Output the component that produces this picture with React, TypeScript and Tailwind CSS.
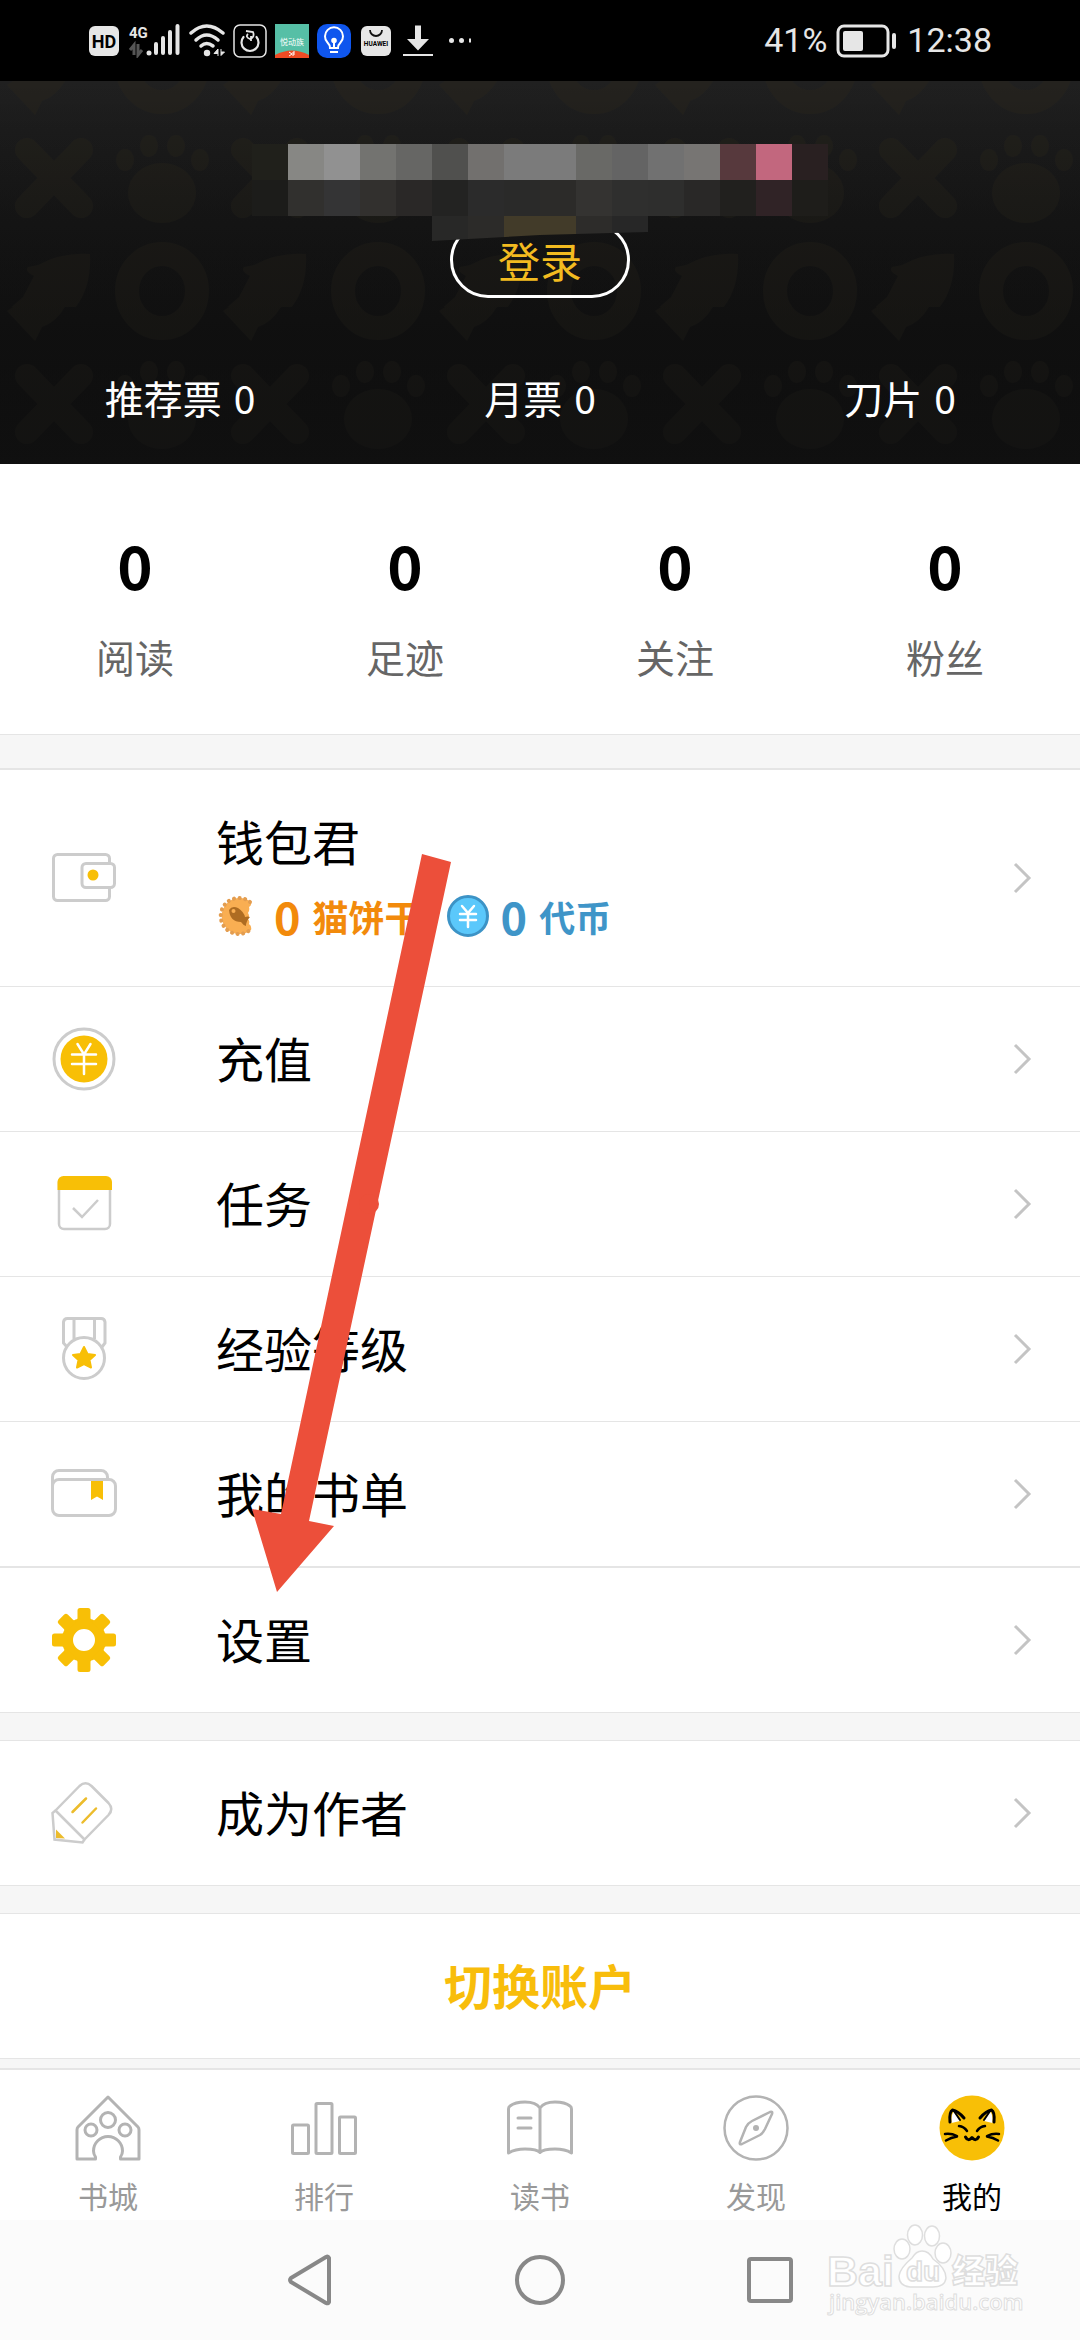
import { ReactNode } from "react"

const GRAY = "#cccccc"
const YELLOW = "#f8bf06"

const PawPattern = () => (
  <svg className="absolute inset-0 h-full w-full" aria-hidden="true">
    <defs>
      <linearGradient id="headerShade" x1="0" y1="0" x2="0" y2="1">
        <stop offset="0" stopColor="#202020" />
        <stop offset="1" stopColor="#101010" />
      </linearGradient>
      <linearGradient id="patternFade" x1="0" y1="0" x2="0" y2="1">
        <stop offset="0" stopColor="#000" stopOpacity="0" />
        <stop offset="1" stopColor="#101010" stopOpacity="0.8" />
      </linearGradient>
      <pattern id="paws" width="216" height="226" patternUnits="userSpaceOnUse">
        <g fill="#25231d">
          <path d="M27 69L81 125M81 69L27 125" stroke="#25231d" strokeWidth="24" strokeLinecap="round" />
          <ellipse cx="162" cy="112" rx="34" ry="30" />
          <ellipse cx="125" cy="79" rx="9" ry="11" />
          <ellipse cx="149" cy="65" rx="9" ry="11" />
          <ellipse cx="176" cy="65" rx="9" ry="11" />
          <ellipse cx="200" cy="79" rx="9" ry="11" />
          <path d="M90 173C92 215 72 240 42 246L35 260L7 230L23 216L34 195Q24 190 28 186L38 184Q62 171 90 173Z" />
          <path d="M7 4L28 -10H70Q60 14 42 20L35 34Z" />
          <ellipse cx="162" cy="210" rx="35" ry="37" fill="none" stroke="#25231d" strokeWidth="24" />
          <ellipse cx="162" cy="-16" rx="35" ry="37" fill="none" stroke="#25231d" strokeWidth="24" />
        </g>
      </pattern>
    </defs>
    <rect width="100%" height="100%" fill="url(#headerShade)" />
    <rect width="100%" height="100%" fill="url(#paws)" opacity="0.75" />
    <rect width="100%" height="100%" fill="url(#patternFade)" />
  </svg>
)

// one string per 36px tile, left to right
const mosaicRows = [
  ["#20201b", "#878784", "#919191", "#737370", "#666664", "#50504e", "#72706e", "#7b7b7b", "#7b7b7b", "#696966", "#646464", "#717171", "#777573", "#57393d", "#c2677e", "#292021"],
  ["#1c1c1a", "#31302e", "#343435", "#32302e", "#2a2827", "#232322", "#2b2b2b", "#2a2a29", "#2c2b29", "#343331", "#2f2f2e", "#2e2e2d", "#292827", "#21201e", "#302326", "#1e1d1a"],
  ["", "", "", "", "", "#282827", "#2c2b29", "#423b29", "#423b29", "#2d2c2a", "#272727"],
]

const Mosaic = () => (
  <svg className="relative z-10" width="576" height="98" viewBox="0 0 576 98" shapeRendering="crispEdges" aria-hidden="true">
    <clipPath id="mosaicEdge">
      <path d="M0 0H576V88H396L288 91L180 97H0Z" />
    </clipPath>
    <g clipPath="url(#mosaicEdge)">
      {mosaicRows.map((row, y) =>
        row.map((fill, x) => fill && <rect key={`${x}-${y}`} x={x * 36} y={y * 36} width="36" height="36" fill={fill} />)
      )}
    </g>
  </svg>
)

const StatusBar = () => (
  <div className="flex h-[81px] items-center justify-between bg-black px-[88px] text-[#e6e6e6]">
    <div className="flex items-center gap-2">
      <svg width="32" height="34" viewBox="0 0 32 34">
        <rect x="1" y="2" width="30" height="30" rx="6" fill="#e6e6e6" />
        <text x="16" y="24" textAnchor="middle" fontFamily="Roboto, sans-serif" fontWeight="700" fontSize="18" fill="#000">HD</text>
      </svg>
      <svg width="52" height="34" viewBox="0 0 52 34">
        <text x="1" y="14" fontFamily="Roboto, sans-serif" fontWeight="700" fontSize="15" fill="#e6e6e6">4G</text>
        <path d="M6 31V21L2 26M10 20V31L14 26" fill="none" stroke="#555" strokeWidth="3" />
        <path d="M28 20V29M35 14V29M42 8V29M49.500 2V29" stroke="#e6e6e6" strokeWidth="4" strokeLinecap="round" />
        <circle cx="21" cy="29" r="2.500" fill="#e6e6e6" />
      </svg>
      <svg width="37" height="34" viewBox="0 0 37 34">
        <g fill="none" stroke="#e6e6e6" strokeWidth="3.500" strokeLinecap="round">
          <path d="M3 9Q18.500 -5 35 9" />
          <path d="M8 16Q18.500 6 30 16" />
          <path d="M13 22Q18.500 17 25 22" />
        </g>
        <circle cx="19" cy="29" r="3.200" fill="#e6e6e6" />
        <path d="M30 32V25L26 29.500H30M33 25V31.500L36.500 28H33" fill="#e6e6e6" stroke="#e6e6e6" />
      </svg>
      <svg width="34" height="34" viewBox="0 0 34 34" fill="none" stroke="#e6e6e6">
        <rect x="1" y="1" width="32" height="32" rx="6" strokeWidth="1.500" />
        <path d="M10.500 13A8.500 8.500 0 1 0 23.500 13" strokeWidth="2.200" strokeLinecap="round" />
        <path d="M13 7L20 8Q22 13 17 15Q12 13 15 10M18 12V17" strokeWidth="1.800" />
      </svg>
      <svg width="34" height="34" viewBox="0 0 34 34">
        <rect width="34" height="34" fill="#56bfa6" />
        <path d="M0 34V31Q17 22 34 31V34Z" fill="#ee4b24" />
        <text x="17" y="21" textAnchor="middle" fontFamily="'Noto Sans CJK SC', sans-serif" fontSize="8" fill="#fff">悦动族</text>
        <path d="M14 28L17 30L14 32M18 28V32M18 28H20M18 30H20" stroke="#fff" fill="none" />
      </svg>
      <svg width="34" height="34" viewBox="0 0 34 34" fill="none" stroke="#fff" strokeWidth="2">
        <rect width="34" height="34" rx="10" fill="#0f56ee" stroke="none" />
        <path d="M13 24Q13 21 10.500 18.500A9 9 0 1 1 23.500 18.500Q21 21 21 24ZM13 28H21" />
        <path d="M17 23V17" />
        <circle cx="17" cy="16.500" r="1.800" fill="#fff" />
      </svg>
      <svg width="34" height="34" viewBox="0 0 34 34">
        <rect x="2" y="2" width="30" height="30" rx="6" fill="#e6e6e6" />
        <path d="M11 6A6 6 0 0 0 23 6" fill="none" stroke="#111" strokeWidth="1.800" />
        <text x="17" y="22" textAnchor="middle" fontFamily="Roboto, sans-serif" fontWeight="700" fontSize="6.500" fill="#000">HUAWEI</text>
      </svg>
      <svg width="34" height="34" viewBox="0 0 34 34" fill="#e6e6e6">
        <path d="M14 1.500H20V15H28L17 26.500L6 15H14Z" strokeLinejoin="round" />
        <rect x="2" y="30" width="30" height="2" />
      </svg>
      <svg width="34" height="34" viewBox="0 0 34 34" fill="#e6e6e6">
        <circle cx="8.500" cy="16.500" r="2.500" />
        <circle cx="18.500" cy="16.500" r="2.500" />
        <path d="M26 14.500H28V18.500H26Z" />
      </svg>
    </div>
    <div className="flex items-center font-[Roboto,sans-serif] text-[34px]">
      <span>41%</span>
      <svg className="mx-2" width="64" height="34" viewBox="0 0 64 34">
        <rect x="3" y="2" width="50" height="30" rx="6" fill="none" stroke="#e6e6e6" strokeWidth="3" />
        <rect x="8" y="7" width="20" height="20" rx="2" fill="#e6e6e6" />
        <rect x="57" y="9" width="4" height="16" rx="2" fill="#e6e6e6" />
      </svg>
      <span>12:38</span>
    </div>
  </div>
)

const tickets = ["推荐票", "月票", "刀片"]

const Header = () => (
  <header className="relative flex flex-col items-center overflow-hidden bg-[#171717] pt-[63px] text-white">
    <PawPattern />
    <Mosaic />
    <button className="relative -mt-5 flex h-[76px] w-[180px] items-center justify-center rounded-full border-3 border-white text-[42px] leading-none text-[#f3bb20]">
      登录
    </button>
    <div className="relative grid w-full grid-cols-3 pt-[69px] pb-[37px] text-[39px] leading-[60px]">
      {tickets.map((label) => (
        <div key={label} className="flex justify-center gap-3">
          <span>{label}</span>
          <span>0</span>
        </div>
      ))}
    </div>
  </header>
)

const stats = ["阅读", "足迹", "关注", "粉丝"]

const Stats = () => (
  <section className="grid grid-cols-4 bg-white pt-[60px] pb-12 text-center">
    {stats.map((label) => (
      <a key={label} href="#" className="flex flex-col">
        <span className="text-[60px] leading-[80px] font-bold">0</span>
        <span className="pt-[22px] text-[39px] leading-[60px] text-[#666666]">{label}</span>
      </a>
    ))}
  </section>
)

const Icon = ({ children }: { children: ReactNode }) => (
  <svg width="72" height="72" viewBox="0 0 72 72" fill="none" stroke={GRAY} strokeWidth="3" className="shrink-0" aria-hidden="true">
    {children}
  </svg>
)

const WalletIcon = () => (
  <Icon>
    <rect x="5.500" y="12.500" width="56" height="46" rx="4" />
    <rect x="34" y="21.500" width="32.500" height="24" rx="4" fill="#fff" />
    <circle cx="45" cy="33" r="5.500" fill={YELLOW} stroke="none" />
  </Icon>
)

const RechargeIcon = () => (
  <Icon>
    <circle cx="36" cy="36" r="30" />
    <circle cx="36" cy="36" r="23.500" fill={YELLOW} stroke="none" />
    <path d="M29.500 21L36 31.500L42.500 21M24 31.500H48M24 41H48M36 31.500V51" stroke="#fff" strokeWidth="2.500" strokeLinecap="round" />
  </Icon>
)

const TaskIcon = () => (
  <Icon>
    <rect x="11" y="10" width="51" height="51" rx="5" strokeWidth="2.500" />
    <path d="M9.500 22V14A6 6 0 0 1 15.500 8H58A6 6 0 0 1 64 14V22Z" fill={YELLOW} stroke="none" />
    <path d="M25 40L34 49L50 32" strokeWidth="2.500" />
  </Icon>
)

const MedalIcon = () => (
  <Icon>
    <path d="M19 34L15.500 30V9A4 4 0 0 1 19.500 5.500H53A4 4 0 0 1 57 9V30L54 34M26 5.500V26M46.500 5.500V26" />
    <circle cx="36" cy="45" r="20.500" />
    <path d="M36 34L39.500 41L47 42L41.500 47L43 54.500L36 51L29 54.500L30.500 47L25 42L32.500 41Z" fill={YELLOW} stroke={YELLOW} strokeWidth="2" strokeLinejoin="round" />
  </Icon>
)

const BooklistIcon = () => (
  <Icon>
    <path d="M4.500 28V19A6.500 6.500 0 0 1 11 12.500H53A6.500 6.500 0 0 1 59.500 19V21" />
    <rect x="4.500" y="21.500" width="63" height="36" rx="6.500" />
    <path d="M43 23H55V42L49 38.500L43 42Z" fill={YELLOW} stroke="none" />
  </Icon>
)

const teeth = [0, 45, 90, 135, 180, 225, 270, 315]

const SettingsIcon = () => (
  <Icon>
    <circle cx="36" cy="36" r="16.500" stroke={YELLOW} strokeWidth="11" />
    {teeth.map((deg) => (
      <path key={deg} d="M27 18Q29.500 17 29.500 14V6.500A2.500 2.500 0 0 1 32 4H40A2.500 2.500 0 0 1 42.500 6.500V14Q42.500 17 45 18Z" fill={YELLOW} stroke="none" transform={`rotate(${deg} 36 36)`} />
    ))}
  </Icon>
)

const AuthorIcon = () => (
  <Icon>
    <path d="M7.500 33.500L31.500 9Q37.500 3.500 43.500 9L60.500 26Q66 32 60.500 38L36.500 62.500Z" strokeWidth="2.500" strokeLinejoin="round" />
    <path d="M7.500 33.500L4.500 36L6.500 62.500L34.500 65.500L36.500 62.500" strokeWidth="2.500" />
    <path d="M8 52.500L17 61.500L8 61Z" fill="#ecbc2c" stroke="none" />
    <path d="M24.500 35L38 21.500M34.500 45.500L48 31.500" stroke="#ecbc2c" strokeWidth="2.500" strokeLinecap="round" />
  </Icon>
)

const Chevron = () => (
  <svg width="20" height="32" viewBox="0 0 20 32" fill="none" stroke="#c4c4c4" strokeWidth="3" className="ml-auto shrink-0" aria-hidden="true">
    <path d="M3 2L17 16L3 30" />
  </svg>
)

interface MenuRowProps {
  icon: ReactNode
  label: string
  tall?: boolean
  children?: ReactNode
}

const MenuRow = ({ icon, label, tall, children }: MenuRowProps) => (
  <a href="#" className={`box-content flex items-center bg-white px-12 ${tall ? "min-h-[216px]" : "min-h-36"}`}>
    {icon}
    <div className="ml-24 pb-1">
      <div className="text-[48px] leading-[72px]">{label}</div>
      {children}
    </div>
    <Chevron />
  </a>
)

const WalletBalance = () => (
  <div className="flex items-center gap-4 pt-2 text-[36px] leading-[64px] font-bold">
    <svg width="42" height="42" viewBox="0 0 42 42" aria-hidden="true">
      <path d="M35 7A18 18 0 1 0 35 35Q36 31 33 29Q34 26 32 24Q34 21 32 18Q34 15 33 12Q36 10 35 7Z" fill="#f9ae52" />
      <path d="M34 7A18 18 0 1 0 34 35" fill="none" stroke="#e39d50" strokeWidth="4" strokeLinecap="round" strokeDasharray="0.100 5.500" />
      <path d="M13 15Q16 10 22 13Q28 17 29 22Q32 21 34 22Q30 26 30 31Q27 30 25 27Q14 27 13 15Z" fill="#ae6c22" />
      <circle cx="17.500" cy="16" r="2" fill="#f9ae52" />
    </svg>
    <span className="flex items-center gap-3 text-[#f28a0b]">
      <span className="text-[45px]">0</span>
      猫饼干
    </span>
    <svg className="ml-2.5" width="42" height="42" viewBox="0 0 42 42" aria-hidden="true">
      <circle cx="21" cy="21" r="19.500" fill="#5bc8fb" stroke="#3c93c6" strokeWidth="3" />
      <path d="M15 11L21 18L27 11M13 19H29M13 25H29M21 18V32" fill="none" stroke="#fff" strokeWidth="2.500" strokeLinecap="round" />
    </svg>
    <span className="-ml-1 flex items-center gap-3 text-[#3f95c8]">
      <span className="text-[45px]">0</span>
      代币
    </span>
  </div>
)

const PointerArrow = () => (
  <svg className="pointer-events-none absolute top-[84px] left-[252px]" width="200" height="738" viewBox="0 0 200 738" fill="#ec4f3a" aria-hidden="true">
    <path d="M170 0L199 8L57 667L82 672L25 738L0 655L29 660Z" />
    <circle cx="117" cy="350" r="10" />
  </svg>
)

interface TabProps {
  label: string
  active?: boolean
  children: ReactNode
}

const Tab = ({ label, active, children }: TabProps) => (
  <a href="#" className={`flex flex-1 flex-col items-center text-[30px] leading-[44px] ${active ? "text-black" : "text-[#999999]"}`}>
    <svg width="66" height="66" viewBox="0 0 66 66" fill="none" stroke="#b3b3b3" strokeWidth="3" strokeLinejoin="round" aria-hidden="true">
      {children}
    </svg>
    <span className="pt-3">{label}</span>
  </a>
)

const TabBar = () => (
  <nav className="flex border-t-2 border-[#e5e5e5] bg-white pt-[25px] pb-[3px]">
    <Tab label="书城">
      <path d="M33 2L63 32Q64 33 64 35V64H45.500V62Q47.500 59 47.500 56A14.500 14.500 0 0 0 18.500 56Q18.500 59 20.500 62V64H2V35Q2 33 3 32Z" />
      <circle cx="33" cy="25" r="7.500" />
      <circle cx="16" cy="35" r="6" />
      <circle cx="50" cy="35" r="6" />
    </Tab>
    <Tab label="排行">
      <rect x="1.500" y="30" width="16" height="28.500" rx="1" />
      <rect x="25" y="8.500" width="16" height="50" rx="1" />
      <rect x="48.500" y="22" width="16" height="36.500" rx="1" />
    </Tab>
    <Tab label="读书">
      <path d="M33 13Q29 7 18 7Q8 7 3 11Q1.500 12 1.500 14V58Q8 54 18 54Q30 54 33 57.500Q36 54 48 54Q58 54 64.500 58V14Q64.500 12 63 11Q58 7 48 7Q37 7 33 13ZM33 13V57" />
      <path d="M11 23H24M11 33H24" strokeLinecap="round" />
    </Tab>
    <Tab label="发现">
      <circle cx="33" cy="33" r="31.500" strokeWidth="2.500" />
      <path d="M47 17Q50 16 49 19L42 34Q40 38 37 40L19 49Q16 50 17 47L23 32Q25 28 29 26Z" strokeWidth="2.500" />
      <circle cx="33" cy="33" r="3" fill="#b3b3b3" stroke="none" />
    </Tab>
    <Tab label="我的" active>
      <circle cx="33" cy="33" r="32.500" fill={YELLOW} stroke="none" />
      <path d="M12.500 28Q12 20 14.500 17Q18 20 21 26ZM53.500 28Q54 20 51.500 17Q48 20 45 26Z" fill="#fff" stroke="none" />
      <g stroke="#000" strokeWidth="3" strokeLinecap="round">
        <path d="M11 27Q10 17 13.500 15Q19 16 25 23M55 27Q56 17 52.500 15Q47 16 41 23" />
        <path d="M15 16L21 25M51 16L45 25" strokeWidth="2" />
        <path d="M20 31Q25 31.500 28 36M46 31Q41 31.500 38 36" strokeWidth="2.500" />
        <path d="M6 39Q12 38 18 41M7 45.500Q12 42.500 18 41.500M60 39Q54 38 48 41M59 45.500Q54 42.500 48 41.500" strokeWidth="2.500" />
        <path d="M26.500 42Q29 47 33 42.500Q37 47 39.500 42" />
      </g>
    </Tab>
  </nav>
)

const Watermark = () => (
  <svg className="absolute top-1 right-12" width="208" height="104" viewBox="0 0 208 104" fill="#ffffff" stroke="#dedede" strokeWidth="1.500">
    <ellipse cx="78" cy="25" rx="8" ry="10" />
    <ellipse cx="91" cy="11" rx="7.500" ry="10" />
    <ellipse cx="108" cy="12" rx="7.500" ry="10" />
    <ellipse cx="119" cy="29" rx="8" ry="10" />
    <path d="M98 27Q105 27 109 35Q122 44 122 54Q121 63 109 63H86Q75 62 75 52Q76 44 88 34Q92 27 98 27Z" />
    <g fontFamily="'Liberation Sans', sans-serif" fontWeight="700">
      <text x="3" y="62" fontSize="43">Bai</text>
      <text x="82" y="57" fontSize="28">du</text>
    </g>
    <text x="128" y="59" fontFamily="'Noto Sans CJK SC', sans-serif" fontWeight="900" fontSize="33">经验</text>
    <text x="5" y="86" fontFamily="'Open Sans', sans-serif" fontWeight="600" fontSize="22" strokeWidth="1">jingyan.baidu.com</text>
  </svg>
)

const SystemBar = () => (
  <div className="relative flex h-[120px] items-center justify-center bg-[#fbfbfb]">
    <div className="flex gap-44">
      <button aria-label="返回">
        <svg width="54" height="54" viewBox="0 0 54 54" fill="none" stroke="#888" strokeWidth="4" strokeLinejoin="round">
          <path d="M46 5V49Q45 51 43 50L8 29Q6 27 8 25L43 4Q45 3 46 5Z" />
        </svg>
      </button>
      <button aria-label="主屏幕">
        <svg width="54" height="54" viewBox="0 0 54 54" fill="none" stroke="#888" strokeWidth="4">
          <circle cx="27" cy="27" r="23" />
        </svg>
      </button>
      <button aria-label="最近任务">
        <svg width="54" height="54" viewBox="0 0 54 54" fill="none" stroke="#888" strokeWidth="4">
          <rect x="6" y="6" width="42" height="42" rx="2" />
        </svg>
      </button>
    </div>
    <Watermark />
  </div>
)

export default function App() {
  return (
    <div className="flex min-h-screen flex-col bg-[#f6f6f6] font-['Noto_Sans_CJK_SC',sans-serif] text-black">
      <StatusBar />
      <Header />
      <Stats />
      <div className="h-9 border-t border-b-2 border-[#e5e5e5]" />
      <main className="relative">
        <div className="divide-y divide-[#e5e5e5]">
          <MenuRow icon={<WalletIcon />} label="钱包君" tall>
            <WalletBalance />
          </MenuRow>
          <MenuRow icon={<RechargeIcon />} label="充值" />
          <MenuRow icon={<TaskIcon />} label="任务" />
          <MenuRow icon={<MedalIcon />} label="经验等级" />
          <MenuRow icon={<BooklistIcon />} label="我的书单" />
        </div>
        <div className="border-t-2 border-b border-[#e5e5e5]">
          <MenuRow icon={<SettingsIcon />} label="设置" />
        </div>
        <div className="mt-[27px] border-y border-[#e5e5e5]">
          <MenuRow icon={<AuthorIcon />} label="成为作者" />
        </div>
        <div className="mt-[27px] border-y border-[#e5e5e5]">
          <button className="h-36 w-full bg-white pb-1 text-[48px] font-bold text-[#f8bd0b]">切换账户</button>
        </div>
        <PointerArrow />
      </main>
      <div className="min-h-[9px] flex-1" />
      <TabBar />
      <SystemBar />
    </div>
  )
}
